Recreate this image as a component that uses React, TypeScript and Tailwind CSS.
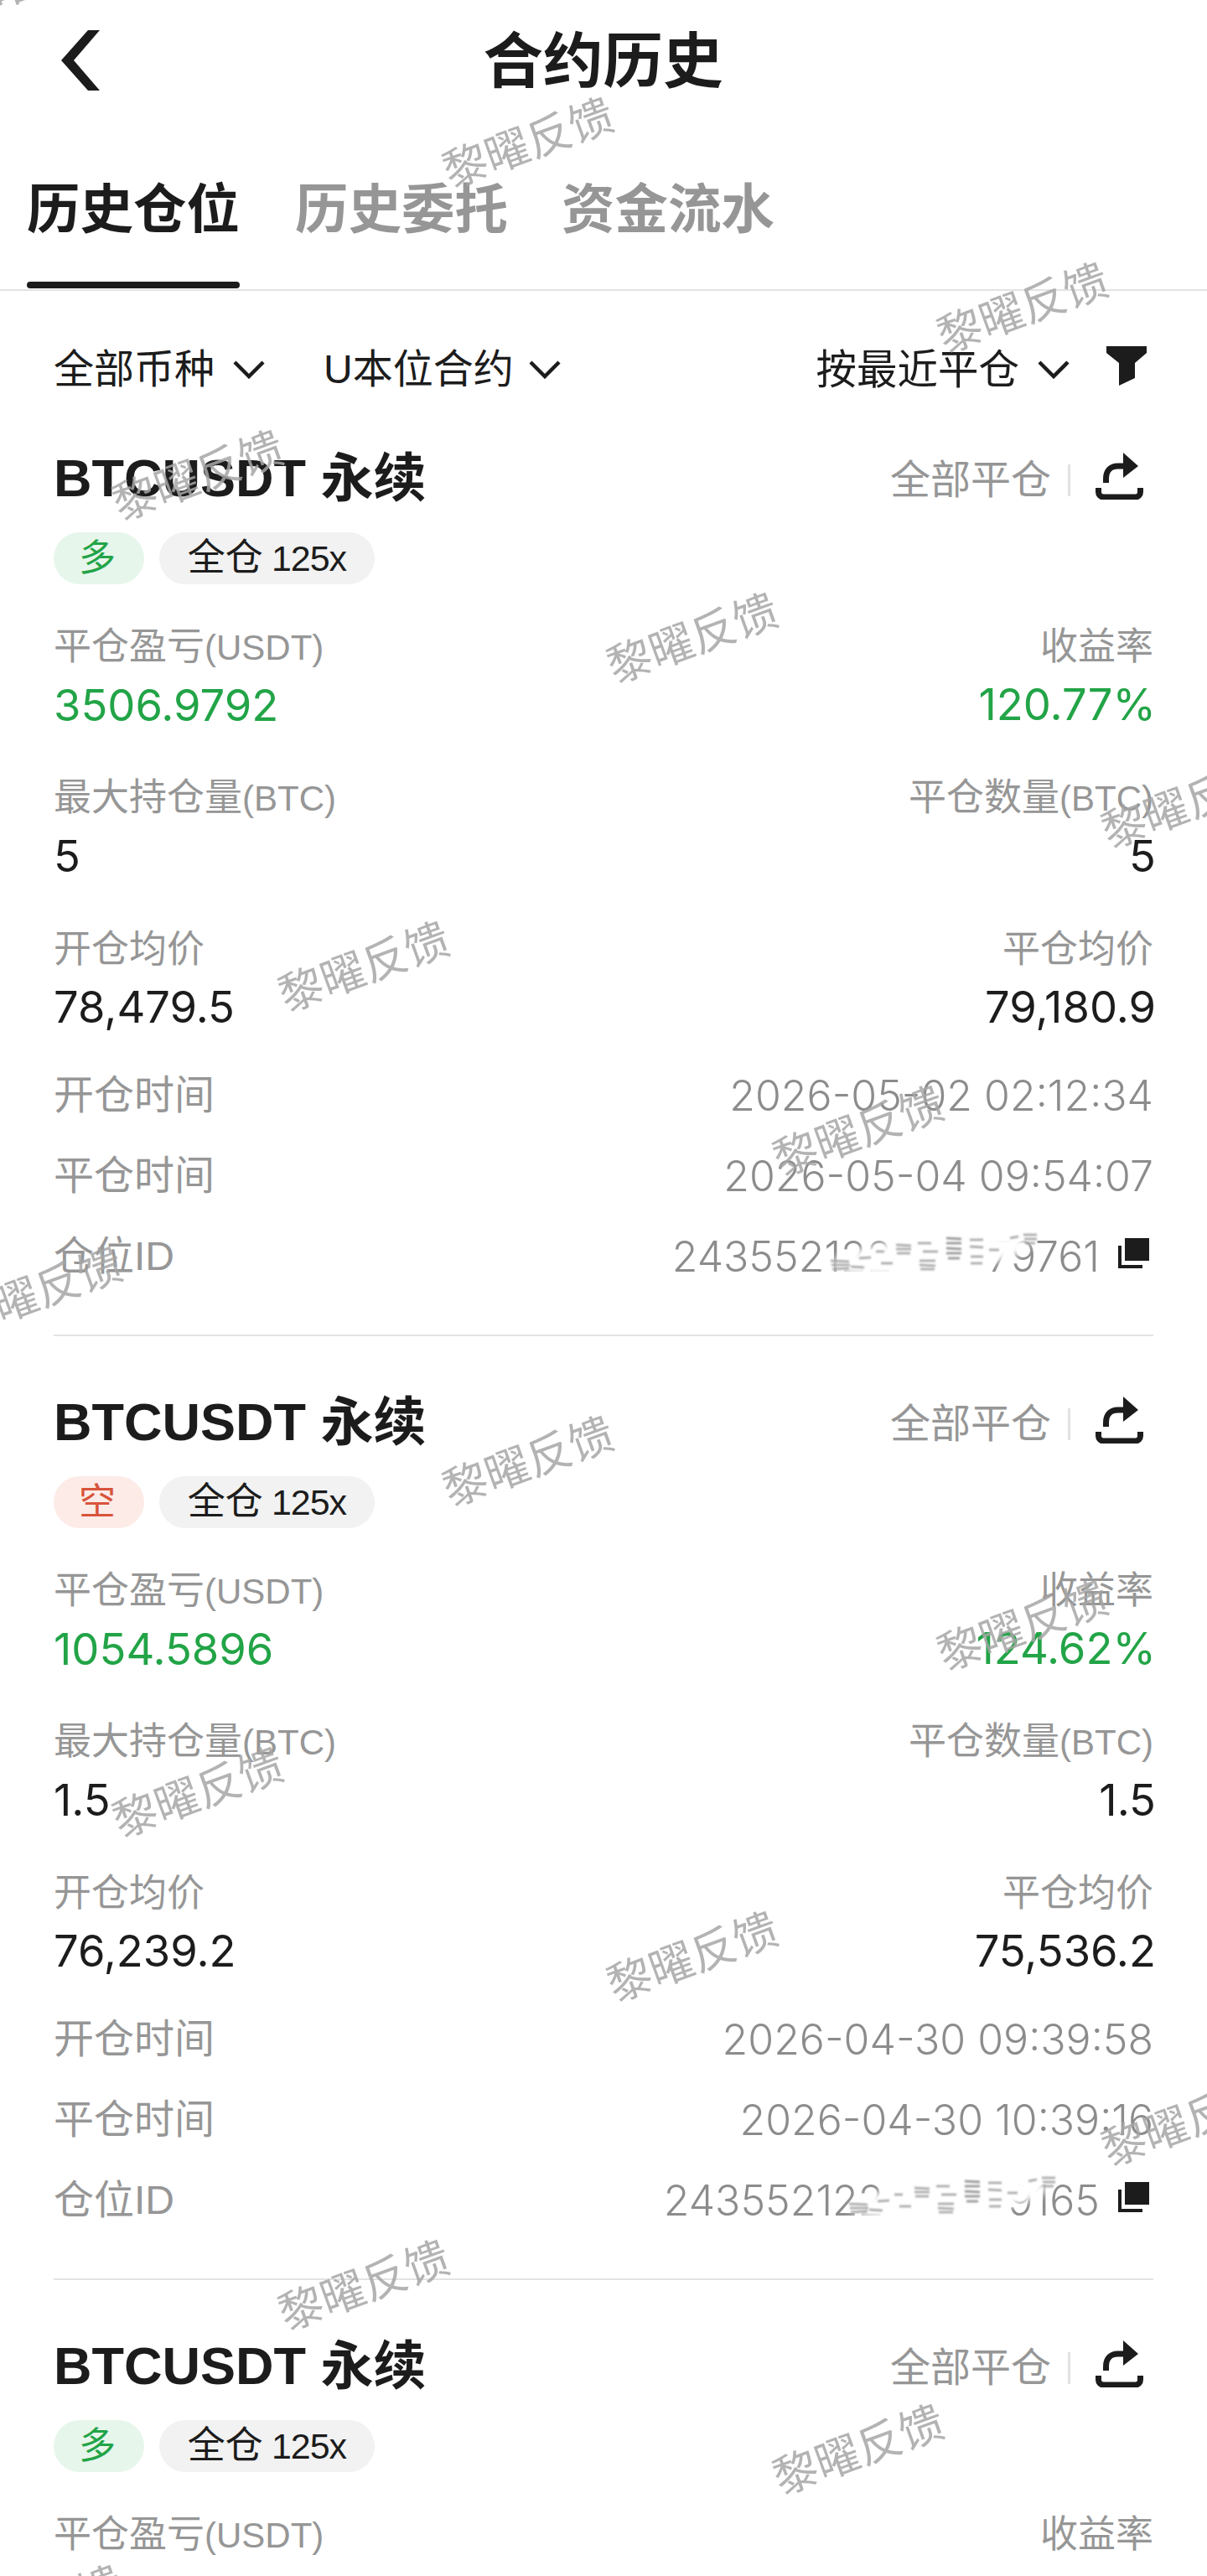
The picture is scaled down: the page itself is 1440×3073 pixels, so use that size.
// App.tsx
// Contract history list: three position cards under a header, tabs and filters,
// with the repeating diagonal watermark over everything.

const WATERMARKS = [
  [39, -30], [629, 167], [1219, 364], [235, 564], [825, 758], [1415, 955],
  [433, 1150], [1023, 1346], [43, 1538], [629, 1740], [1219, 1936], [235, 2135],
  [825, 2331], [1415, 2527], [433, 2723], [1023, 2919], [43, 3111],
];

type Position = {
  side: "long" | "short";
  pnl?: string;
  roe?: string;
  maxQty?: string;
  closeQty?: string;
  openAvg?: string;
  closeAvg?: string;
  openTime?: string;
  closeTime?: string;
  idHead?: string;
  idTail?: string;
  slot?: string;
  smudge?: string;
};

const POSITIONS: Position[] = [
  {
    side: "long", pnl: "3506.9792", roe: "120.77%", maxQty: "5", closeQty: "5",
    openAvg: "78,479.5", closeAvg: "79,180.9",
    openTime: "2026-05-02 02:12:34", closeTime: "2026-05-04 09:54:07",
    idHead: "243552122", idTail: "79761", slot: "w-[114px]", smudge: "left-[-76px]",
  },
  {
    side: "short", pnl: "1054.5896", roe: "124.62%", maxQty: "1.5", closeQty: "1.5",
    openAvg: "76,239.2", closeAvg: "75,536.2",
    openTime: "2026-04-30 09:39:58", closeTime: "2026-04-30 10:39:16",
    idHead: "243552122", idTail: "9165", slot: "w-[148px]", smudge: "left-[-46px]",
  },
  { side: "long" },
];

function Chevron() {
  return (
    <svg width="38" height="22" viewBox="0 0 38 22" className="shrink-0">
      <polyline points="2,2 19,19 36,2" fill="none" stroke="#1c1c1c" strokeWidth="4.5" />
    </svg>
  );
}

function ShareIcon() {
  return (
    <svg width="58" height="56" viewBox="0 0 58 56" className="shrink-0" fill="none" stroke="#1c1c1c">
      <path d="M3.5 42v5a6 6 0 0 0 6 6h38a6 6 0 0 0 6-6v-5" strokeWidth="7" />
      <path d="M12.5 36v-5c0-10 6-15 14-15h8" strokeWidth="7" />
      <polygon points="33,0 51,16 33,30" fill="#1c1c1c" stroke="none" />
    </svg>
  );
}

function CopyIcon() {
  return (
    <svg width="37" height="36" viewBox="0 0 37 36" className="shrink-0" fill="#1c1c1c">
      <rect x="8" y="0" width="29" height="27" />
      <path d="M0 9h4v23h25v4H0z" />
    </svg>
  );
}

// the hand-smeared part of the position id
function Smudge({ pos }: { pos?: string }) {
  return (
    <svg width="262" height="64" viewBox="0 0 262 64" className={`absolute top-[-6px] ${pos}`}>
      <defs>
        <filter id="smear" x="-20%" y="-40%" width="140%" height="180%">
          <feGaussianBlur stdDeviation="5" />
        </filter>
        <filter id="smearFine" x="-20%" y="-40%" width="140%" height="180%">
          <feGaussianBlur stdDeviation="1.1" />
        </filter>
      </defs>
      <ellipse cx="125" cy="34" rx="118" ry="22" fill="#fff" transform="rotate(-6 125 34)" filter="url(#smear)" />
      <g stroke="#a2a2a2" strokeWidth="2.5" filter="url(#smearFine)">
        <path d="M6 41l22 1M7 46l22 0M8 51l20-1M30 48l16 1M40 38l14-1" />
        <path d="M84 22l18 1M84 27l18 0M85 32l16 0M60 30l10 0M66 44l14 0" />
        <path d="M112 41l19 0M112 46l19 1M113 51l17 0M110 20l16 0M116 30l18 0" />
        <path d="M144 14l18 1M144 20l18 0M144 26l18 1M144 32l18 0M146 38l14 0" stroke="#8c8c8c" />
        <path d="M172 16l16 0M172 24l16 1M173 36l15 0M173 44l14 0M195 28l12 0" />
        <path d="M236 10l16 0M237 15l15 0M238 20l12 0M220 14l10-2" />
      </g>
    </svg>
  );
}

function Metric({ label, unit, value, green, right }: { label: string; unit?: string; value: string; green?: boolean; right?: boolean }) {
  return (
    <div className={right ? "flex flex-col items-end" : "flex flex-col items-start"}>
      <div className="text-[45px] leading-[56px] text-[#969696]">
        {label}
        {unit && <span className="text-[42px]">{unit}</span>}
      </div>
      <div className={`mt-[10px] font-['Inter',sans-serif] text-[52.5px] leading-[60px] ${right ? "mr-[-3px]" : ""} ${green ? "text-[#22a447]" : "text-[#1c1c1c]"}`}>{value}</div>
    </div>
  );
}

function TimeRow({ label, value }: { label: string; value?: string }) {
  return (
    <div className="flex justify-between items-center">
      <span className="text-[48px] leading-[56px] text-[#969696]">{label}</span>
      <span className="font-['Inter',sans-serif] font-light text-[50px] leading-[56px] text-[#8c8c8c]">{value}</span>
    </div>
  );
}

function PositionCard({ p }: { p: Position }) {
  const long = p.side === "long";
  return (
    <div className="mx-[64px] pt-[67px]">
      <div className="flex items-center justify-between h-[70px]">
        <div className="text-[63px] leading-[70px] font-bold text-[#1c1c1c]">BTCUSDT 永续</div>
        <div className="flex items-center">
          <span className="text-[48px] leading-[56px] text-[#969696] mt-[5px]">全部平仓</span>
          <span className="ml-[20px] mr-[30px] h-[38px] w-[3px] bg-[#e2e2e2] mt-[5px]"></span>
          <span className="mr-[11px] mt-[-4px]"><ShareIcon /></span>
        </div>
      </div>

      <div className="mt-[30px] flex gap-[18px] h-[62px]">
        <span className={`w-[108px] rounded-[31px] flex items-center justify-center text-[44px] pr-[4px] ${long ? "bg-[#e7f6eb] text-[#22a447]" : "bg-[#fcebe7] text-[#d8543b]"}`}>
          {long ? "多" : "空"}
        </span>
        <span className="w-[257px] rounded-[31px] bg-[#f2f2f2] flex items-center justify-center text-[45px] text-[#1c1c1c]">
          全仓 <span className="ml-[10px] text-[43px] tracking-[-1px]">125x</span>
        </span>
      </div>

      {!p.pnl ? (
        <div className="mt-[47px] flex justify-between">
          <div className="text-[45px] leading-[56px] text-[#969696]">平仓盈亏<span className="text-[42px]">(USDT)</span></div>
          <div className="text-[45px] leading-[56px] text-[#969696]">收益率</div>
        </div>
      ) : (
        <>
          <div className="mt-[47px] flex justify-between">
            <Metric label="平仓盈亏" unit="(USDT)" value={p.pnl} green />
            <Metric label="收益率" value={p.roe!} green right />
          </div>
          <div className="mt-[53px] flex justify-between">
            <Metric label="最大持仓量" unit="(BTC)" value={p.maxQty!} />
            <Metric label="平仓数量" unit="(BTC)" value={p.closeQty!} right />
          </div>
          <div className="mt-[54px] flex justify-between">
            <Metric label="开仓均价" value={p.openAvg!} />
            <Metric label="平仓均价" value={p.closeAvg!} right />
          </div>

          <div className="mt-[48px] flex flex-col gap-[40px]">
            <TimeRow label="开仓时间" value={p.openTime} />
            <TimeRow label="平仓时间" value={p.closeTime} />
            <div className="flex justify-between items-center">
              <span className="text-[48px] leading-[56px] text-[#969696]">仓位ID</span>
              <div className="flex items-center font-['Inter',sans-serif] font-light text-[50px] leading-[56px] text-[#8c8c8c]">
                <span>{p.idHead}</span>
                <span className={`relative block h-[56px] ${p.slot}`}></span>
                <span className="relative">{p.idTail}</span>
                <span className="ml-[22px] mr-[5px] mt-[-8px]"><CopyIcon /></span>
              </div>
            </div>
          </div>

          <div className="mt-[65px] h-[2px] bg-[#e3e3e3]"></div>
        </>
      )}
    </div>
  );
}

export default function App() {
  return (
    <div className="relative w-[1440px] h-[3073px] overflow-hidden bg-white font-['Liberation_Sans','Noto_Sans_CJK_SC',sans-serif]">
      {/* header */}
      <div className="h-[140px] grid grid-cols-[1fr_auto_1fr] items-center pl-[73px]">
        <svg width="46" height="72" viewBox="0 0 46 72" className="mt-[4px]">
          <polygon points="32,0 46,0 15,36 46,72 32,72 0,36" fill="#1c1c1c" />
        </svg>
        <div className="text-[71.5px] leading-[80px] font-bold text-[#1c1c1c] -translate-x-[37px] mt-[6px]">合约历史</div>
        <div></div>
      </div>

      {/* tabs */}
      <div className="h-[207px] pt-[75px] pl-[32px] flex gap-[66px] border-b-2 border-[#e3e3e3] whitespace-nowrap">
        <div className="w-[254px]">
          <div className="text-[63.5px] leading-[70px] font-bold text-[#1c1c1c] text-center">历史仓位</div>
          <div className="mt-[51px] h-[8px] rounded-[4px] bg-[#1c1c1c]"></div>
        </div>
        <div className="text-[63.5px] leading-[70px] font-bold text-[#969696]">历史委托</div>
        <div className="text-[63.5px] leading-[70px] font-bold text-[#969696] ml-[-2px]">资金流水</div>
      </div>

      {/* filters */}
      <div className="h-[121px] pt-[64px] pl-[64px] pr-[72px] flex items-start">
        <div className="flex items-center h-[60px] gap-[22px] text-[48px] leading-[60px] text-[#1c1c1c]">
          全部币种
          <Chevron />
        </div>
        <div className="ml-[70px] flex items-center h-[60px] gap-[18px] text-[48px] leading-[60px] text-[#1c1c1c]">
          U本位合约
          <Chevron />
        </div>
        <div className="ml-auto flex items-center h-[60px] gap-[22px] text-[48.5px] leading-[60px] text-[#1c1c1c]">
          按最近平仓
          <Chevron />
        </div>
        <svg width="48" height="48" viewBox="0 0 48 48" className="ml-[44px] mt-[2px]">
          <polygon points="0,0 48,0 48,8 34,20 34,38 15,47 15,20 0,8" fill="#1c1c1c" />
        </svg>
      </div>

      {POSITIONS.map((p, i) => (
        <PositionCard key={i} p={p} />
      ))}

      {/* smears over the position ids */}
      <div className="absolute left-[1061px] top-[1469px] w-0 h-0"><Smudge pos={POSITIONS[0].smudge} /></div>
      <div className="absolute left-[1053px] top-[2594px] w-0 h-0"><Smudge pos={POSITIONS[1].smudge} /></div>

      {/* watermark layer */}
      <div className="absolute inset-0 pointer-events-none">
        {WATERMARKS.map(([x, y]) => (
          <span
            key={`${x}-${y}`}
            className="absolute -translate-x-1/2 -translate-y-1/2 -rotate-[20deg] whitespace-nowrap text-[53px] leading-[60px] text-[#a6a6a6]/85 font-['Noto_Sans_CJK_SC',sans-serif]"
            style={{ left: x, top: y }}
          >
            黎曜反馈
          </span>
        ))}
      </div>
    </div>
  );
}
